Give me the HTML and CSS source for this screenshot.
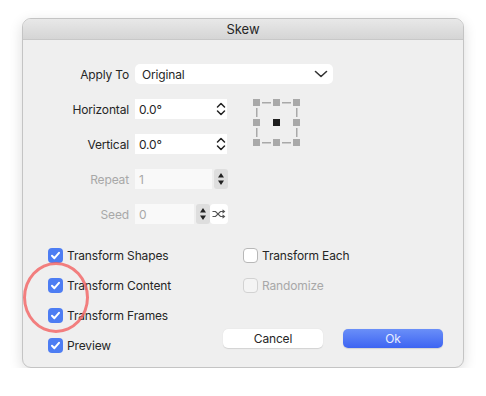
FILE: index.html
```html
<!DOCTYPE html>
<html lang="en">
  <head>
    <meta charset="UTF-8" />
    <meta name="viewport" content="width=device-width, initial-scale=1.0" />
    <title>Skew</title>
    <link rel="stylesheet" href="styles.css">
  </head>
  <body>
    <div class="window">
      <div class="titlebar">Skew</div>
      <div class="content">
        <div class="form">
          <label class="lbl">Apply To</label>
          <div class="select">
            <span>Original</span>
            <svg width="14" height="8" viewBox="0 0 14 8"><path d="M1.5 1.5 L7 6.5 L12.5 1.5" fill="none" stroke="#333" stroke-width="1.6" stroke-linecap="round" stroke-linejoin="round"/></svg>
          </div>

          <label class="lbl">Horizontal</label>
          <div class="field">
            <span>0.0°</span>
            <svg width="10" height="14" viewBox="0 0 10 14"><path d="M1.5 5 L5 1.5 L8.5 5 M1.5 9 L5 12.5 L8.5 9" fill="none" stroke="#222" stroke-width="1.5" stroke-linecap="round" stroke-linejoin="round"/></svg>
          </div>
          <div class="origin">
            <svg width="47" height="47" viewBox="0 0 47 47">
              <g fill="#a9a9a9">
                <rect x="0" y="0" width="7" height="7"/><rect x="20" y="0" width="7" height="7"/><rect x="40" y="0" width="7" height="7"/>
                <rect x="0" y="20" width="7" height="7"/><rect x="40" y="20" width="7" height="7"/>
                <rect x="0" y="40" width="7" height="7"/><rect x="20" y="40" width="7" height="7"/><rect x="40" y="40" width="7" height="7"/>
                <rect x="9" y="3" width="9" height="1.5"/><rect x="29" y="3" width="9" height="1.5"/>
                <rect x="9" y="43" width="9" height="1.5"/><rect x="29" y="43" width="9" height="1.5"/>
                <rect x="3" y="9" width="1.5" height="9"/><rect x="3" y="29" width="1.5" height="9"/>
                <rect x="43" y="9" width="1.5" height="9"/><rect x="43" y="29" width="1.5" height="9"/>
              </g>
              <rect x="20" y="20" width="7" height="7" fill="#1e1e1e"/>
            </svg>
          </div>

          <label class="lbl">Vertical</label>
          <div class="field">
            <span>0.0°</span>
            <svg width="10" height="14" viewBox="0 0 10 14"><path d="M1.5 5 L5 1.5 L8.5 5 M1.5 9 L5 12.5 L8.5 9" fill="none" stroke="#222" stroke-width="1.5" stroke-linecap="round" stroke-linejoin="round"/></svg>
          </div>

          <label class="lbl off">Repeat</label>
          <div class="spin">
            <div class="field off wide"><span>1</span></div>
            <div class="arrows">
              <svg width="8" height="16" viewBox="0 0 8 16"><path d="M4 2 L7 6.5 L1 6.5 Z M4 14 L7 9.5 L1 9.5 Z" fill="#222"/></svg>
            </div>
          </div>

          <label class="lbl off">Seed</label>
          <div class="spin">
            <div class="field off short"><span>0</span></div>
            <div class="arrows">
              <svg width="8" height="16" viewBox="0 0 8 16"><path d="M4 2 L7 6.5 L1 6.5 Z M4 14 L7 9.5 L1 9.5 Z" fill="#222"/></svg>
            </div>
            <div class="shuffle">
              <svg width="14" height="10" viewBox="0 0 14 10"><path d="M0.5 2.5 H3.5 L8.5 7.5 H12 M0.5 7.5 H3.5 L8.5 2.5 H12 M10.5 0.8 L12.5 2.5 L10.5 4.2 M10.5 5.8 L12.5 7.5 L10.5 9.2" fill="none" stroke="#555" stroke-width="1.1"/></svg>
            </div>
          </div>
        </div>

        <div class="options">
          <div class="check"><span class="box on"></span>Transform Shapes</div>
          <div class="check right"><span class="box"></span>Transform Each</div>
          <div class="check"><span class="box on"></span>Transform Content</div>
          <div class="check right off"><span class="box"></span>Randomize</div>
          <div class="check"><span class="box on"></span>Transform Frames</div>
          <div></div>
          <div class="check"><span class="box on"></span>Preview</div>
          <div class="buttons">
            <button class="btn">Cancel</button>
            <button class="btn ok">Ok</button>
          </div>
        </div>
      </div>
      <div class="mark"></div>
    </div>
  </body>
</html>
```

FILE: styles.css
```css
*{
    margin: 0;
    padding: 0;
    box-sizing: border-box;
}
body{
    background: #fff;
    font-family: Inter, "Noto Sans", sans-serif;
    font-size: 12px;
    letter-spacing: -0.15px;
    color: #262626;
}
.window{
    position: relative;
    margin: 18px 0 0 22px;
    width: 442px;
    height: 350px;
    border: 1px solid #c4c4c4;
    border-radius: 9px;
    background: #efefef;
    box-shadow: 0 4px 14px rgba(0, 0, 0, 0.14);
    overflow: hidden;
}
.titlebar{
    height: 21px;
    line-height: 20px;
    text-align: center;
    font-size: 13px;
    letter-spacing: 0;
    color: #262626;
    background: linear-gradient(#e8e8e8, #d5d5d5);
    border-bottom: 1px solid #c8c8c8;
}
.content{
    padding: 24px 0 0 25px;
}
.form{
    display: grid;
    grid-template-columns: 81px 92px 1fr;
    grid-auto-rows: 20px;
    column-gap: 6px;
    row-gap: 15px;
    align-items: center;
}
.lbl{
    grid-column: 1;
    text-align: right;
    white-space: nowrap;
}
.off{
    color: #a8a8a8;
}
.select{
    grid-column: 2 / 4;
    width: 198px;
    height: 20px;
    background: #fff;
    border-radius: 5px;
    display: flex;
    align-items: center;
    justify-content: space-between;
    padding: 0 5px 0 7px;
}
.field{
    height: 20px;
    background: #fff;
    display: flex;
    align-items: center;
    justify-content: space-between;
    padding: 0 1px 0 4px;
}
.origin{
    grid-row: 2 / 4;
    grid-column: 3;
    align-self: start;
    margin-left: 20px;
}
.origin svg{
    display: block;
}
.spin{
    grid-column: 2 / 4;
    display: flex;
    align-items: center;
    gap: 2px;
}
.field.wide{
    width: 77px;
    background: #f9f9f9;
}
.field.short{
    width: 59px;
    background: #f9f9f9;
}
.arrows{
    width: 14px;
    height: 20px;
    background: #dedede;
    border-radius: 3px;
    display: flex;
    align-items: center;
    justify-content: center;
}
.arrows svg{
    display: block;
}
.shuffle{
    width: 18px;
    height: 20px;
    margin-left: -2px;
    background: #fff;
    border-radius: 4px;
    display: flex;
    align-items: center;
    justify-content: center;
}
.options{
    margin-top: 16px;
    display: grid;
    grid-template-columns: 175px 1fr;
    grid-auto-rows: 30px;
}
.check{
    display: flex;
    align-items: center;
    gap: 4px;
}
.check.right{
    padding-left: 20px;
}
.box{
    width: 15px;
    height: 15px;
    border-radius: 4px;
    background: #fff;
    border: 1px solid #b8b8b8;
    flex-shrink: 0;
}
.check.off .box{
    border-color: #d2d2d2;
    background: #f4f4f4;
}
.box.on{
    border: none;
    background: #4d7df3 url("data:image/svg+xml,%3Csvg xmlns='http://www.w3.org/2000/svg' width='15' height='15' viewBox='0 0 15 15'%3E%3Cpath d='M4 7.8 L6.4 10.2 L11 4.8' fill='none' stroke='white' stroke-width='2' stroke-linecap='round' stroke-linejoin='round'/%3E%3C/svg%3E") center no-repeat;
}
.buttons{
    display: flex;
    gap: 20px;
    align-self: start;
    margin-top: -1px;
}
.btn{
    width: 100px;
    height: 19px;
    border: none;
    border-radius: 5px;
    background: #fff;
    font-family: inherit;
    font-size: 12px;
    letter-spacing: -0.15px;
    color: #262626;
    box-shadow: 0 0.5px 1px rgba(0, 0, 0, 0.12);
}
.btn.ok{
    background: linear-gradient(#6a8ff8, #3d64f2);
    color: #e8eeff;
}
.mark{
    position: absolute;
    left: 0;
    top: 243px;
    width: 66px;
    height: 71px;
    border: 3px solid rgba(242, 98, 98, 0.8);
    border-radius: 50%;
}
```
